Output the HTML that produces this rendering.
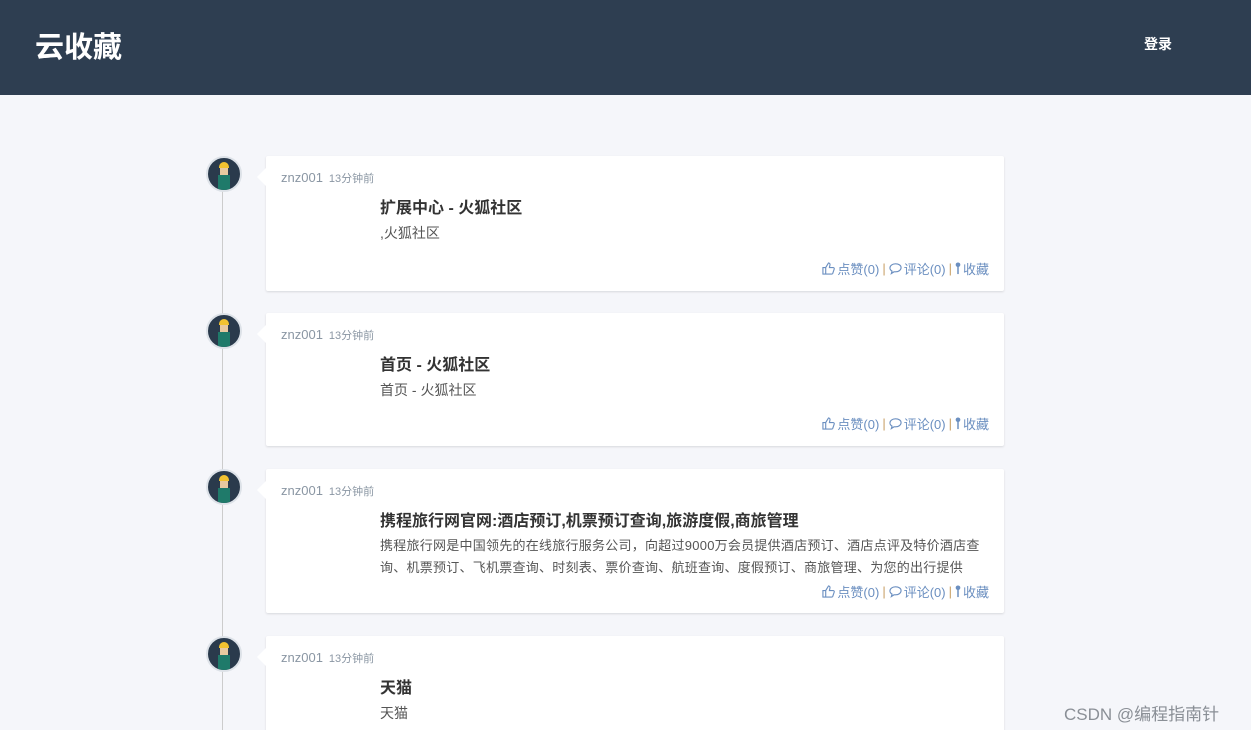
<!DOCTYPE html><html><head><meta charset="utf-8"><style>
html,body{margin:0;width:1251px;height:730px;overflow:hidden}
body{background:#f5f6fa;font-family:"Liberation Sans","Noto Sans CJK SC",sans-serif;position:relative}
.hd{height:95px;background:#2e3e51;position:relative}
.hd .logo{position:absolute;left:35px;top:24px;color:#fff;font-size:29px;font-weight:bold}
.hd .lg{position:absolute;left:1144px;top:34px;color:#fff;font-size:14px;font-weight:bold}
.line{position:absolute;left:222px;top:175px;width:1px;height:560px;background:#ccc}
.av{position:absolute;left:206px;width:32px;height:32px;border-radius:50%;background:#2a3a4c;border:2px solid #dde2e8;overflow:hidden}
.av i{position:absolute;left:11px;top:4px;width:10px;height:6px;background:#f2c230;border-radius:5px 5px 0 0}
.av b{position:absolute;left:12px;top:10px;width:8px;height:7px;background:#e8c9a0}
.av u{position:absolute;left:10px;top:17px;width:12px;height:15px;background:#1f7a6a}
.card{position:absolute;left:266px;width:738px;background:#fff;border-radius:2px;box-shadow:0 1px 2px rgba(0,0,0,.12)}
.card:before{content:"";position:absolute;left:-9px;top:12px;border:9px solid transparent;border-left:0;border-right-color:#fff}
.meta{position:absolute;left:15px;top:14px;font-size:13px;color:#8a96a3}
.meta small{font-size:11px;margin-left:6px}
.t{position:absolute;left:114px;top:38px;font-size:16px;font-weight:bold;color:#333}
.d{position:absolute;left:114px;top:66px;font-size:14px;color:#555;width:610px;line-height:22px}
.ft{position:absolute;right:15px;bottom:13px;font-size:13px;color:#6b8fc0;display:flex;align-items:center;gap:1px}
.ft span{color:#c9a066;margin:0 2px}
.ft svg{width:13px;height:13px;margin-right:1px}
</style></head><body>
<div class="hd"><div class="logo">云收藏</div><div class="lg">登录</div></div>
<div class="line"></div>
<div class="av" style="top:156px"><i></i><b></b><u></u></div>
<div class="av" style="top:313px"><i></i><b></b><u></u></div>
<div class="av" style="top:469px"><i></i><b></b><u></u></div>
<div class="av" style="top:636px"><i></i><b></b><u></u></div>
<div class="card" style="top:156px;height:135px"><div class="meta">znz001<small>13分钟前</small></div><div class="t">扩展中心 - 火狐社区</div><div class="d">,火狐社区</div><div class="ft"><svg viewBox="0 0 14 14" fill="none" stroke="#6b8fc0" stroke-width="1.2"><path d="M1 6h3v7H1zM4 6l3-5c1 0 2 1 1.5 2.5L8 6h4c1 0 1.5 1 1 2l-1.5 4.5c-.3.5-.6.5-1 .5H4"/></svg>点赞(0)<span>|</span><svg viewBox="0 0 14 14" fill="none" stroke="#6b8fc0" stroke-width="1.2"><path d="M7 2C3.5 2 1 4 1 6.5c0 1.5 1 2.6 2.3 3.3L2.5 12.5l3-2c.5.1 1 .1 1.5.1 3.5 0 6-2 6-4.5S10.5 2 7 2z"/></svg>评论(0)<span>|</span><svg viewBox="0 0 6 14" style="width:6px"><circle cx="3" cy="3" r="2.5" fill="#6b8fc0"/><rect x="2.2" y="5" width="1.6" height="8" fill="#6b8fc0"/></svg>收藏</div></div>
<div class="card" style="top:313px;height:133px"><div class="meta">znz001<small>13分钟前</small></div><div class="t">首页 - 火狐社区</div><div class="d">首页 - 火狐社区</div><div class="ft"><svg viewBox="0 0 14 14" fill="none" stroke="#6b8fc0" stroke-width="1.2"><path d="M1 6h3v7H1zM4 6l3-5c1 0 2 1 1.5 2.5L8 6h4c1 0 1.5 1 1 2l-1.5 4.5c-.3.5-.6.5-1 .5H4"/></svg>点赞(0)<span>|</span><svg viewBox="0 0 14 14" fill="none" stroke="#6b8fc0" stroke-width="1.2"><path d="M7 2C3.5 2 1 4 1 6.5c0 1.5 1 2.6 2.3 3.3L2.5 12.5l3-2c.5.1 1 .1 1.5.1 3.5 0 6-2 6-4.5S10.5 2 7 2z"/></svg>评论(0)<span>|</span><svg viewBox="0 0 6 14" style="width:6px"><circle cx="3" cy="3" r="2.5" fill="#6b8fc0"/><rect x="2.2" y="5" width="1.6" height="8" fill="#6b8fc0"/></svg>收藏</div></div>
<div class="card" style="top:469px;height:144px"><div class="meta">znz001<small>13分钟前</small></div><div class="t">携程旅行网官网:酒店预订,机票预订查询,旅游度假,商旅管理</div><div class="d" style="height:44px;overflow:hidden;font-size:13px;width:610px;letter-spacing:.25px">携程旅行网是中国领先的在线旅行服务公司，向超过9000万会员提供酒店预订、酒店点评及特价酒店查询、机票预订、飞机票查询、时刻表、票价查询、航班查询、度假预订、商旅管理、为您的出行提供</div><div class="ft" style="bottom:12px"><svg viewBox="0 0 14 14" fill="none" stroke="#6b8fc0" stroke-width="1.2"><path d="M1 6h3v7H1zM4 6l3-5c1 0 2 1 1.5 2.5L8 6h4c1 0 1.5 1 1 2l-1.5 4.5c-.3.5-.6.5-1 .5H4"/></svg>点赞(0)<span>|</span><svg viewBox="0 0 14 14" fill="none" stroke="#6b8fc0" stroke-width="1.2"><path d="M7 2C3.5 2 1 4 1 6.5c0 1.5 1 2.6 2.3 3.3L2.5 12.5l3-2c.5.1 1 .1 1.5.1 3.5 0 6-2 6-4.5S10.5 2 7 2z"/></svg>评论(0)<span>|</span><svg viewBox="0 0 6 14" style="width:6px"><circle cx="3" cy="3" r="2.5" fill="#6b8fc0"/><rect x="2.2" y="5" width="1.6" height="8" fill="#6b8fc0"/></svg>收藏</div></div>
<div class="card" style="top:636px;height:120px"><div class="meta">znz001<small>13分钟前</small></div><div class="t">天猫</div><div class="d">天猫</div></div>
<div style="position:absolute;left:1064px;top:700px;font-size:17px;color:#8a8f96">CSDN @编程指南针</div>
</body></html>
